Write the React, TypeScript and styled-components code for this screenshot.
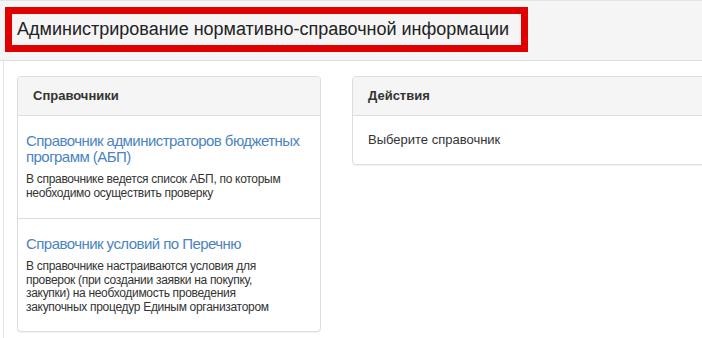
import React from 'react'
import styled, { createGlobalStyle } from 'styled-components'

const GlobalStyle = createGlobalStyle`
  html, body {
    margin: 0;
    padding: 0;
    background: #ffffff;
    overflow: hidden;
  }
  body {
    font-family: 'Liberation Sans', Arial, sans-serif;
    color: #333333;
  }
`

const Page = styled.div`
  width: 702px;
  height: 338px;
  overflow: hidden;
`

const TopBar = styled.header`
  height: 61px;
  box-sizing: border-box;
  background: #f5f5f5;
  border-top: 1px solid #e3e3e3;
  border-bottom: 1px solid #dedede;
  padding: 6px 0 0 5px;
`

const Title = styled.h1`
  display: inline-block;
  margin: 0;
  padding: 0 12px 0 5px;
  height: 31px;
  line-height: 31px;
  border: 7px solid #e10000;
  font-size: 18px;
  font-weight: normal;
  color: #222222;
  white-space: nowrap;
`

const Content = styled.main`
  margin-left: 3px;
  border-left: 1px solid #e3e3e3;
  padding: 15px 0 0 13px;
  display: grid;
  grid-template-columns: 304px 400px;
  column-gap: 31px;
  align-items: start;
  height: 300px;
  box-sizing: border-box;
`

const Panel = styled.section`
  border: 1px solid #dddddd;
  border-radius: 4px;
  background: #ffffff;
  box-shadow: 0 1px 1px rgba(0, 0, 0, 0.05);
  overflow: hidden;
`

const PanelHeading = styled.div`
  height: 38px;
  line-height: 38px;
  padding: 0 15px;
  background: #f5f5f5;
  border-bottom: 1px solid #dddddd;
  font-size: 13px;
  font-weight: bold;
  color: #333333;
`

const PanelBody = styled.div`
  padding: 15px 15px;
  font-size: 13px;
  line-height: 18px;
`

const Item = styled.div<{ $last?: boolean }>`
  padding: 17px 14px ${p => (p.$last ? '17px' : '18px')} 8px;
  border-bottom: ${p => (p.$last ? 'none' : '1px solid #dddddd')};
`

const ItemLink = styled.a`
  display: block;
  font-size: 15px;
  line-height: 16px;
  letter-spacing: -0.55px;
  color: #4a84c1;
  text-decoration: none;
  margin-bottom: 8px;
`

const ItemText = styled.p`
  margin: 0;
  max-width: 266px;
  font-size: 12px;
  line-height: 13.5px;
  letter-spacing: -0.3px;
  color: #333333;
`

const dictionaries = [
  {
    title: 'Справочник администраторов бюджетных программ (АБП)',
    text: 'В справочнике ведется список АБП, по которым необходимо осуществить проверку',
  },
  {
    title: 'Справочник условий по Перечню',
    text:
      'В справочнике настраиваются условия для проверок (при создании заявки на покупку, закупки) на необходимость проведения закупочных процедур Единым организатором',
  },
]

export default function App() {
  return (
    <Page>
      <GlobalStyle />
      <TopBar>
        <Title>Администрирование нормативно-справочной информации</Title>
      </TopBar>
      <Content>
        <Panel>
          <PanelHeading>Справочники</PanelHeading>
          {dictionaries.map((d, i) => (
            <Item key={d.title} $last={i === dictionaries.length - 1}>
              <ItemLink href="#">{d.title}</ItemLink>
              <ItemText>{d.text}</ItemText>
            </Item>
          ))}
        </Panel>
        <Panel>
          <PanelHeading>Действия</PanelHeading>
          <PanelBody>Выберите справочник</PanelBody>
        </Panel>
      </Content>
    </Page>
  )
}
